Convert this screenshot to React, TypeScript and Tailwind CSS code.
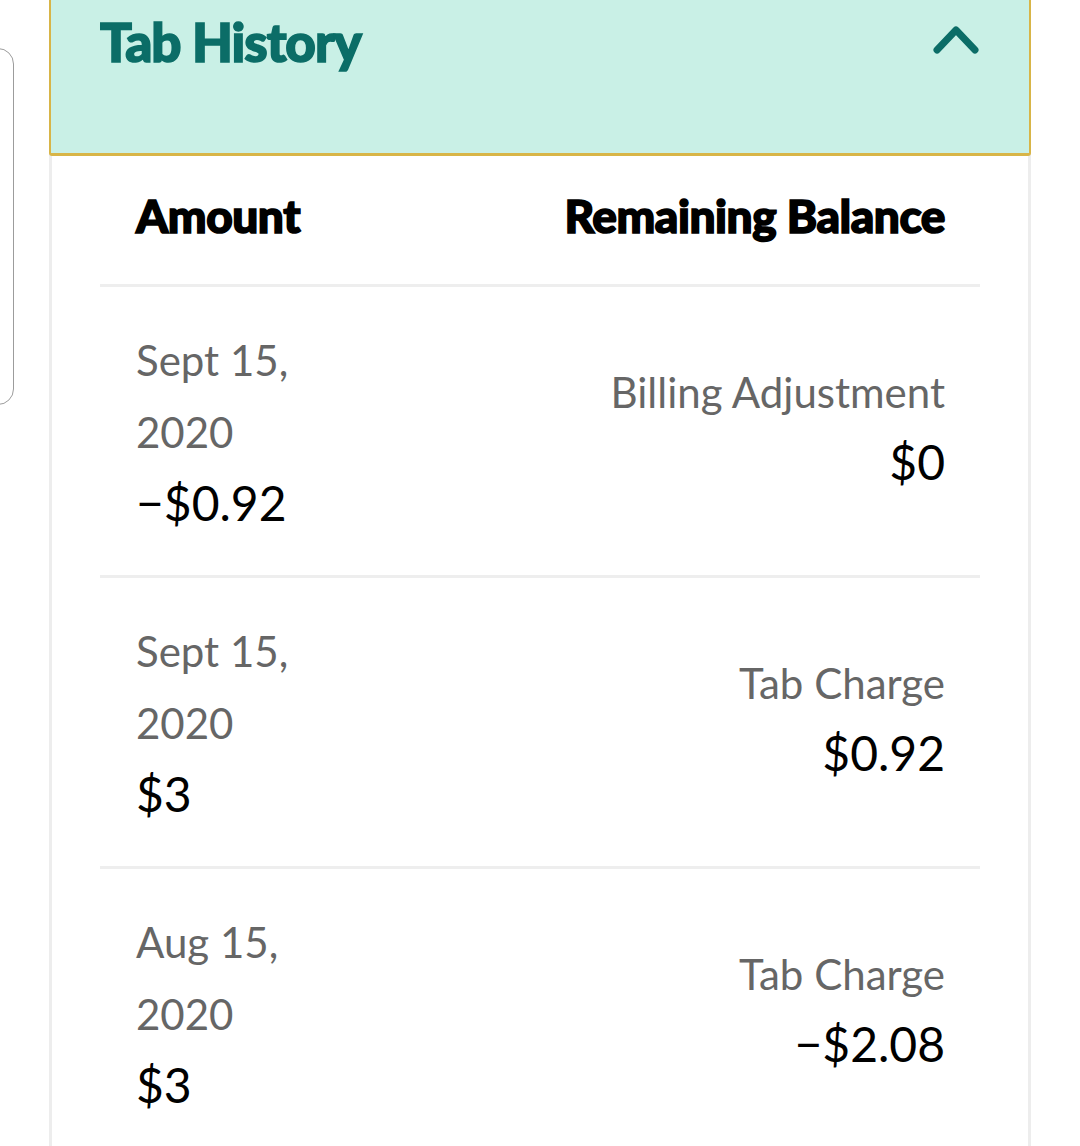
import { ReactNode } from 'react'

type Entry = {
  date: string
  amount: string
  label: string
  balance: string
}

const entries: Entry[] = [
  { date: 'Sept 15, 2020', amount: '−$0.92', label: 'Billing Adjustment', balance: '$0' },
  { date: 'Sept 15, 2020', amount: '$3', label: 'Tab Charge', balance: '$0.92' },
  { date: 'Aug 15, 2020', amount: '$3', label: 'Tab Charge', balance: '−$2.08' },
]

function Heading({ children }: { children: ReactNode }) {
  return (
    <span className="text-[46px] leading-none font-black tracking-[-0.01em] text-black [-webkit-text-stroke:1.6px_#000]">
      {children}
    </span>
  )
}

export default function App() {
  return (
    <div className="min-h-screen bg-white flex items-start overflow-hidden font-['Lato','Noto_Sans',sans-serif]">
      {/* neighbouring card peeking in from the left */}
      <div className="shrink-0 w-[60px] -ml-[46px] mt-[48px] h-[357px] rounded-[16px] border-[1.5px] border-[#9c9c9c]" />

      <div className="shrink-0 ml-[35px] w-[982px] min-h-[1146px] border-x-[3px] border-[#ededed] -mr-[200px]">
        <div className="-mx-[3px] h-[156px] bg-[#c9f0e6] border-x-[2px] border-b-[3px] border-[#d8b548] rounded-b-[3px] flex items-start justify-between pl-[49px] pr-[50px]">
          <h2 className="mt-[15px] text-[53px] leading-none font-black tracking-[-0.02em] text-[#0b6d67] [-webkit-text-stroke:1.6px_#0b6d67]">
            Tab History
          </h2>
          <svg width="46" height="30" viewBox="0 0 46 30" className="mt-[24px]" fill="none">
            <polyline points="4,26 23,6 42,26" stroke="#0b6d67" strokeWidth="7" strokeLinecap="round" strokeLinejoin="round" />
          </svg>
        </div>

        <div className="px-[48px]">
          <div className="h-[131px] flex items-center justify-between pl-[36px] pr-[35px] pb-[8px] border-b-[3px] border-[#eeeeee]">
            <Heading>Amount</Heading>
            <Heading>Remaining Balance</Heading>
          </div>

          {entries.map((e, i) => (
            <div key={i} className="h-[291px] flex items-center justify-between pl-[36px] pr-[35px] border-b-[3px] border-[#eeeeee]">
              <div className="flex flex-col">
                <span className="w-[190px] text-[42px] leading-[72px] text-[#666666]">{e.date}</span>
                <span className="text-[48px] leading-[70px] text-black">{e.amount}</span>
              </div>
              <div className="flex flex-col items-end mb-[8px]">
                <span className="text-[42px] leading-[70px] text-[#666666]">{e.label}</span>
                <span className="text-[48px] leading-[70px] text-black">{e.balance}</span>
              </div>
            </div>
          ))}
        </div>
      </div>
    </div>
  )
}
